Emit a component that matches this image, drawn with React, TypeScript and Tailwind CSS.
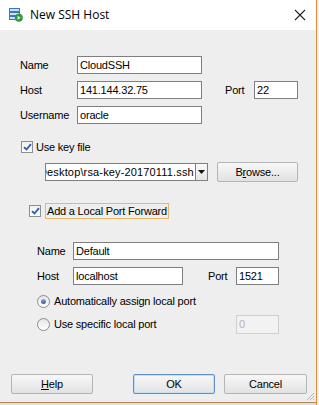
import React from "react";

const font = { fontFamily: '"Liberation Sans", Arial, sans-serif' };

function TextInput({ w, value, disabled }: { w: string; value: string; disabled?: boolean }) {
  return (
    <div
      className={`${w} h-[18px] flex items-center pl-[2px] border ${
        disabled ? "border-[#cfcfcf] bg-[#f4f4f4] text-[#b0b0b0]" : "border-[#7f7f7f] bg-white text-black"
      } overflow-hidden whitespace-nowrap`}
    >
      {value}
    </div>
  );
}

function Checkbox() {
  return (
    <div className="w-[12px] h-[12px] border border-[#8f8f8f] bg-gradient-to-b from-[#f0f0f0] to-white flex items-center justify-center">
      <svg width="9" height="8" viewBox="0 0 9 8">
        <path d="M1 4.2 L3.4 6.5 L8 1.2" fill="none" stroke="#2a5ea8" strokeWidth="1.8" />
      </svg>
    </div>
  );
}

function Radio({ checked }: { checked?: boolean }) {
  return (
    <div className="w-[13px] h-[13px] rounded-full border border-[#8c8c8c] bg-gradient-to-b from-[#e6e6e6] to-white flex items-center justify-center">
      {checked && (
        <div className="w-[5px] h-[5px] rounded-full bg-gradient-to-b from-[#8aa8d8] to-[#2f5da8]" />
      )}
    </div>
  );
}

function Button({ w, children, focused }: { w: string; children: React.ReactNode; focused?: boolean }) {
  return (
    <div
      className={`${w} h-[20px] rounded-[2px] border ${
        focused ? "border-[#5a8fc8] shadow-[inset_0_0_0_1px_#c2e0f6]" : "border-[#b5b5b5]"
      } bg-gradient-to-b from-[#f8f8f8] to-[#e2e2e2] flex items-center justify-center text-black`}
    >
      {children}
    </div>
  );
}

export default function App() {
  return (
    <div className="w-[319px] h-[405px] flex bg-white text-[11px] tracking-[-0.2px]" style={font}>
      <div className="w-[316px] h-full flex flex-col">
        {/* Title bar */}
        <div className="h-[30px] bg-white flex items-center pl-[9px] pr-[9px] shrink-0">
          <svg width="14" height="14" viewBox="0 0 14 14">
            <rect x="0.5" y="0.5" width="10" height="3" fill="#cfe0f2" stroke="#3f78b8" />
            <rect x="0.5" y="4.5" width="10" height="3" fill="#cfe0f2" stroke="#3f78b8" />
            <rect x="0.5" y="8.5" width="10" height="3" fill="#cfe0f2" stroke="#3f78b8" />
            <circle cx="9.8" cy="9.8" r="4" fill="#2f9a3c" />
            <path d="M8.6 7.8 L11.6 9.8 L8.6 11.8 Z" fill="white" />
          </svg>
          <span
            className="ml-[7px] text-[12px] text-black tracking-normal"
            style={{ fontFamily: '"Open Sans", "Noto Sans", sans-serif' }}
          >
            New SSH Host
          </span>
          <div className="flex-1" />
          <svg width="12" height="12" viewBox="0 0 12 12" className="mr-[1px]">
            <path d="M1 1 L11 11 M11 1 L1 11" stroke="#222" strokeWidth="1.1" />
          </svg>
        </div>

        {/* Body */}
        <div className="flex-1 bg-[#eeeeee] flex flex-col relative">
          <div className="pl-[20px] pt-[26px] flex flex-col gap-[7px]">
            <div className="flex items-center">
              <span className="w-[57px]">Name</span>
              <TextInput w="w-[125px]" value="CloudSSH" />
            </div>
            <div className="flex items-center">
              <span className="w-[57px]">Host</span>
              <TextInput w="w-[125px]" value="141.144.32.75" />
              <span className="ml-[23px] w-[29px]">Port</span>
              <TextInput w="w-[44px]" value="22" />
            </div>
            <div className="flex items-center">
              <span className="w-[57px]">Username</span>
              <TextInput w="w-[125px]" value="oracle" />
            </div>
          </div>

          <div className="pl-[21px] mt-[17px] flex items-center h-[12px]">
            <Checkbox />
            <span className="ml-[3px]">Use key file</span>
          </div>

          <div className="pl-[45px] mt-[9px] flex items-center">
            <div className="w-[151px] h-[18px] border border-[#7f7f7f] bg-white flex items-center overflow-hidden whitespace-nowrap">
              <span className="ml-[-7px] tracking-[0.15px]">Desktop\rsa-key-20170111.ssh</span>
            </div>
            <div className="w-[12px] h-[18px] border border-l-0 border-[#7f7f7f] bg-gradient-to-b from-[#fafafa] to-[#e4e4e4] flex items-center justify-center">
              <svg width="7" height="4" viewBox="0 0 7 4">
                <path d="M0 0 L7 0 L3.5 4 Z" fill="#111" />
              </svg>
            </div>
            <div className="ml-[9px]">
              <Button w="w-[81px]">
                <span>
                  B<span className="underline">r</span>owse...
                </span>
              </Button>
            </div>
          </div>

          <div className="pl-[29px] mt-[21px] flex items-center">
            <Checkbox />
            <div className="ml-[4px] h-[16px] px-[1px] border border-[#eab968] flex items-center">
              Add a Local Port Forward
            </div>
          </div>

          <div className="pl-[37px] mt-[23px] flex flex-col gap-[7px]">
            <div className="flex items-center">
              <span className="w-[36px]">Name</span>
              <TextInput w="w-[206px]" value="Default" />
            </div>
            <div className="flex items-center">
              <span className="w-[36px]">Host</span>
              <TextInput w="w-[110px]" value="localhost" />
              <span className="ml-[25px] w-[28px]">Port</span>
              <TextInput w="w-[43px]" value="1521" />
            </div>
          </div>

          <div className="pl-[37px] mt-[8px] flex items-center">
            <Radio checked />
            <span className="ml-[4px]">Automatically assign local port</span>
          </div>

          <div className="pl-[37px] mt-[5px] flex items-center h-[19px]">
            <Radio />
            <span className="ml-[4px] w-[182px]">Use specific local port</span>
            <div className="w-[43px] h-[19px] border border-[#cfcfcf] bg-[#f2f2f2] text-[#b5b5b5] flex items-center pl-[2px]">
              0
            </div>
          </div>

          <div className="flex-1" />

          <div className="flex items-center pl-[11px] pb-[8px]">
            <Button w="w-[82px]">
              <span>
                <span className="underline">H</span>elp
              </span>
            </Button>
            <div className="ml-[40px]">
              <Button w="w-[82px]" focused>
                OK
              </Button>
            </div>
            <div className="ml-[9px]">
              <Button w="w-[83px]">Cancel</Button>
            </div>
          </div>

          <svg width="10" height="10" viewBox="0 0 10 10" className="absolute right-[1px] bottom-[1px]">
            <path d="M9 2 L2 9 M9 5 L5 9 M9 8 L8 9" stroke="#b8b8b8" strokeWidth="1" />
          </svg>
        </div>
        <div className="h-[1px] bg-[#b08660] shrink-0" />
        <div className="h-[2px] bg-[#dedede] shrink-0" />
      </div>
      <div className="w-[1px] h-full bg-[#e8883a]" />
      <div className="w-[2px] h-full bg-[#f4f4f4]" />
    </div>
  );
}
